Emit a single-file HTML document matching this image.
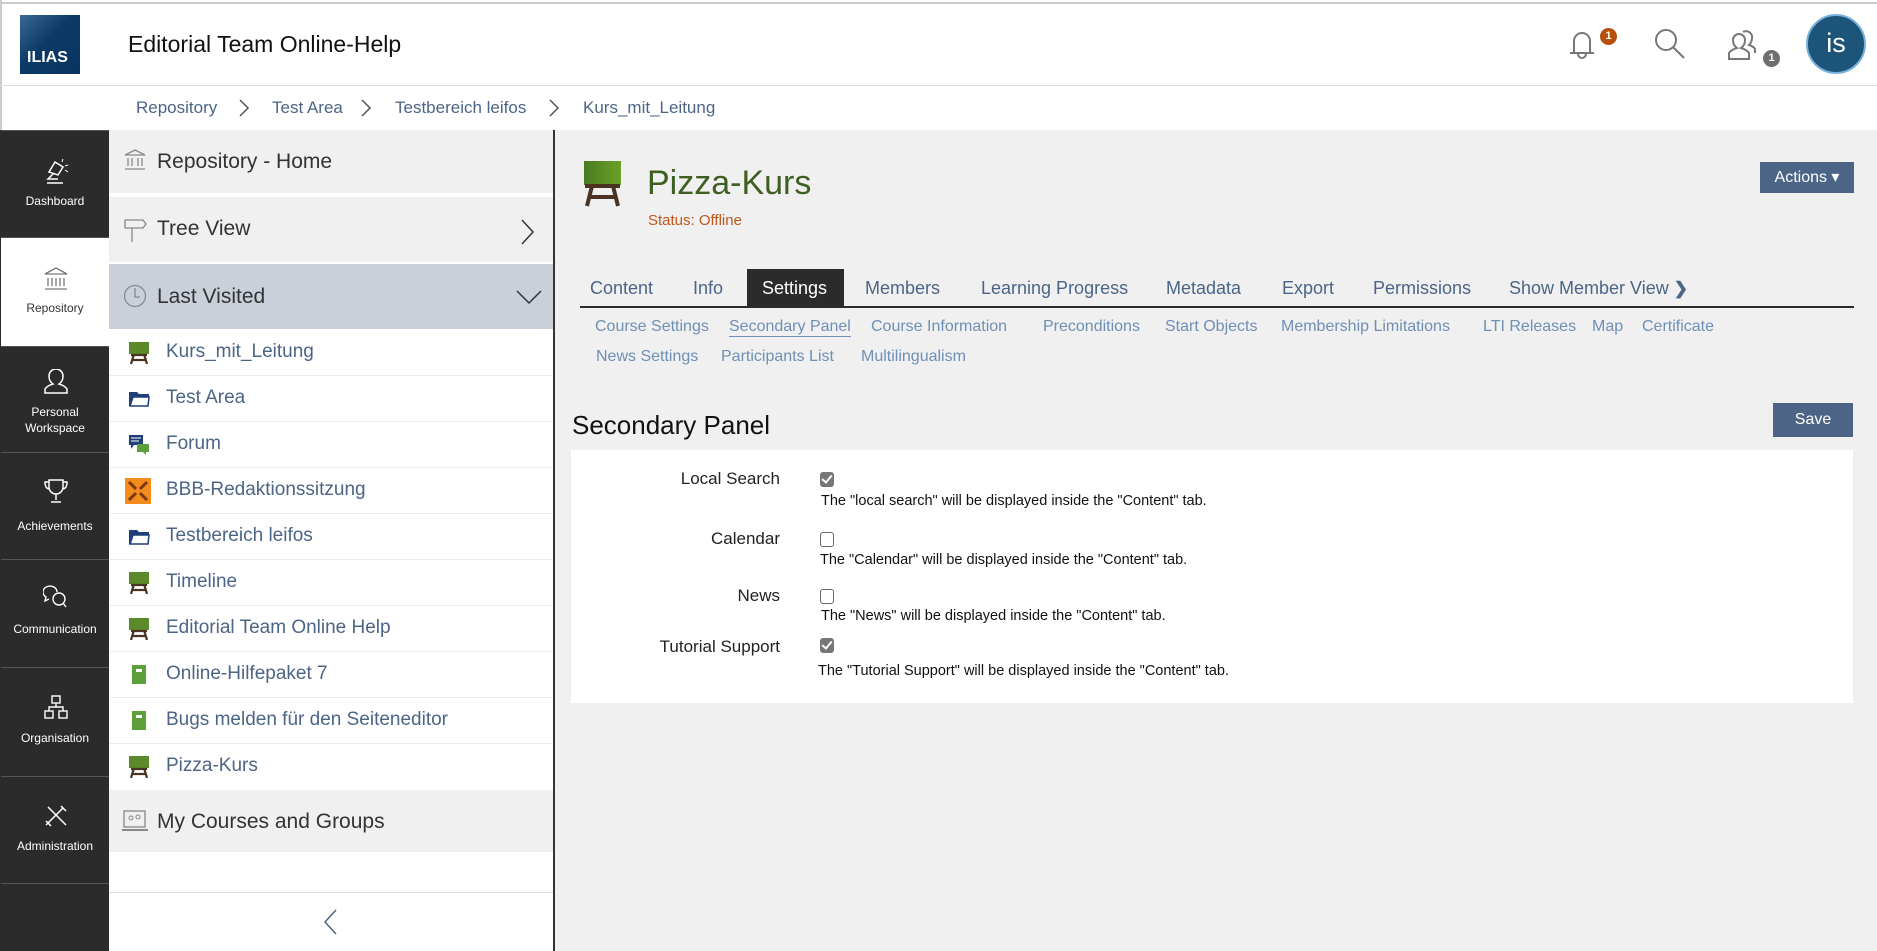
<!DOCTYPE html>
<html><head><meta charset="utf-8"><style>
*{margin:0;padding:0;box-sizing:border-box}
body{width:1877px;height:951px;overflow:hidden;background:#fff;font-family:"Liberation Sans",sans-serif;position:relative}
.a{position:absolute;white-space:nowrap}
.bc{color:#4c6586;font-size:17px;top:98px}
.mb{position:absolute;left:1px;width:108px;background:#2b2b2b;color:#fff;font-size:12px;text-align:center;border-top:1px solid #555}
.mb svg{position:absolute;left:42px}
.mb span{position:absolute;left:0;width:108px;line-height:16px}
.li{position:absolute;left:109px;width:444px;height:46px;border-bottom:1px solid #eee;background:#fff}
.li span{position:absolute;left:57px;top:11px;font-size:19px;color:#4c6586}
.li svg{position:absolute;left:19px;top:12px}
.tab{top:278px;font-size:18px;color:#4c6586}
.st{font-size:16px;color:#6f8fb5}
.lab{font-size:17px;color:#222;text-align:right;width:300px;left:480px}
.desc{font-size:14.5px;color:#111}
.cb{position:absolute;left:820px;width:14px;height:15px;border:1.5px solid #666;border-radius:3px;background:#fff}
.cb.on{background:#777;border-color:#777}
.cb.on:after{content:"";position:absolute;left:3px;top:0px;width:4px;height:8px;border:solid #fff;border-width:0 2px 2px 0;transform:rotate(40deg)}
</style></head><body>
<div class="a" style="left:0;top:2px;width:1877px;height:2px;background:#ccc"></div>
<div class="a" style="left:0;top:0;width:2px;height:130px;background:#ccc"></div>
<div class="a" style="left:20px;top:15px;width:60px;height:59px;background:linear-gradient(135deg,#3a6796,#0b3a66 45%,#083461)"></div>
<div class="a" style="left:27px;top:49px;color:#fff;font-weight:bold;font-size:16px">ILIAS</div>
<div class="a" style="left:128px;top:31px;font-size:23px;color:#111">Editorial Team Online-Help</div>
<div class="a" style="left:0;top:85px;width:1877px;height:1px;background:#ddd"></div>
<div class="a bc" style="left:136px">Repository</div>
<div class="a bc" style="left:272px">Test Area</div>
<div class="a bc" style="left:395px">Testbereich leifos</div>
<div class="a bc" style="left:583px">Kurs_mit_Leitung</div>
<svg class="a" style="left:238px;top:98px" width="12" height="20"><path d="M2 2l8 8-8 8" stroke="#555" fill="none" stroke-width="1.5"/></svg>
<svg class="a" style="left:360px;top:98px" width="12" height="20"><path d="M2 2l8 8-8 8" stroke="#555" fill="none" stroke-width="1.5"/></svg>
<svg class="a" style="left:548px;top:98px" width="12" height="20"><path d="M2 2l8 8-8 8" stroke="#555" fill="none" stroke-width="1.5"/></svg>
<svg class="a" style="left:1566px;top:27px" width="32" height="34"><path d="M4 26h24M8 26V14a8 8 0 0 1 16 0v12M12 27a4 4 0 0 0 8 0" stroke="#777" fill="none" stroke-width="2"/></svg>
<div class="a" style="left:1600px;top:28px;width:17px;height:17px;border-radius:50%;background:#b6500c;color:#fff;font-size:11px;font-weight:bold;text-align:center;line-height:17px">1</div>
<svg class="a" style="left:1653px;top:27px" width="34" height="34"><circle cx="13" cy="13" r="10" stroke="#777" stroke-width="2" fill="none"/><path d="M20 20l11 11" stroke="#777" stroke-width="2"/></svg>
<svg class="a" style="left:1726px;top:28px" width="34" height="34"><path d="M3 31v-6c2-3 5-4 8-5-3-2-4-5-4-8a6 6 0 0 1 12 0c0 3-1 6-4 8 3 1 6 2 8 5v6z" stroke="#777" stroke-width="2" fill="none"/><path d="M17 4a6 6 0 0 1 9 6c0 3-1 5-3 7 3 1 5 2 6 4v4" stroke="#777" stroke-width="2" fill="none"/></svg>
<div class="a" style="left:1763px;top:50px;width:17px;height:17px;border-radius:50%;background:#6f6f6f;color:#fff;font-size:11px;font-weight:bold;text-align:center;line-height:17px">1</div>
<div class="a" style="left:1806px;top:14px;width:60px;height:60px;border-radius:50%;background:#1d5479;border:2px solid #79b3dc;color:#fff;font-size:27px;text-align:center;line-height:54px">is</div>
<div class="a" style="left:0;top:130px;width:109px;height:821px;background:#2b2b2b"></div>
<div class="mb" style="top:130px;height:107px"><svg style="top:27px" width="26" height="28"><path d="M6 14l6-10 8 5-5 8zM10 16l-5 5h10M4 25h16" stroke="#fff" fill="none" stroke-width="1.5"/><path d="M22 8l3-1M22 12l3 2M19 4l1-3" stroke="#fff" stroke-width="1"/></svg><span style="top:62px">Dashboard</span></div>
<div class="mb" style="top:237px;height:109px;background:#fff;color:#333"><svg style="top:28px" width="26" height="26"><path d="M2 8L13 2l11 6zM5 12v8M9 12v8M17 12v8M21 12v8M13 12v8M2 23h22" stroke="#777" fill="none" stroke-width="1.3"/></svg><span style="top:62px">Repository</span></div>
<div class="mb" style="top:346px;height:106px"><svg style="top:22px" width="26" height="26"><path d="M2 24v-4c2-3 5-4 8-5-3-2-4-5-4-8a7 7 0 0 1 14 0c0 3-1 6-4 8 3 1 6 2 8 5v4z" stroke="#fff" fill="none" stroke-width="1.5"/></svg><span style="top:57px">Personal<br>Workspace</span></div>
<div class="mb" style="top:452px;height:107px"><svg style="top:24px" width="26" height="28"><path d="M6 3h14v7a7 7 0 0 1-14 0zM6 5H2c0 5 2 7 5 7M20 5h4c0 5-2 7-5 7M13 17v6M8 25h10" stroke="#fff" fill="none" stroke-width="1.5"/></svg><span style="top:65px">Achievements</span></div>
<div class="mb" style="top:559px;height:108px"><svg style="top:24px" width="26" height="26"><path d="M14 8a7 6 0 1 0-11 5l-1 4 4-2" stroke="#fff" fill="none" stroke-width="1.4"/><circle cx="16" cy="15" r="6" stroke="#fff" fill="none" stroke-width="1.4"/><path d="M20 19l3 4" stroke="#fff" stroke-width="1.4"/></svg><span style="top:61px">Communication</span></div>
<div class="mb" style="top:667px;height:109px"><svg style="top:26px" width="26" height="26"><rect x="9" y="2" width="8" height="7" stroke="#fff" fill="none" stroke-width="1.4"/><rect x="2" y="17" width="8" height="7" stroke="#fff" fill="none" stroke-width="1.4"/><rect x="16" y="17" width="8" height="7" stroke="#fff" fill="none" stroke-width="1.4"/><path d="M13 9v4H6v4M13 13h7v4" stroke="#fff" fill="none" stroke-width="1.4"/></svg><span style="top:62px">Organisation</span></div>
<div class="mb" style="top:776px;height:107px"><svg style="top:26px" width="26" height="26"><path d="M3 22L20 5M5 4l18 18M18 3l5 5M3 18l5 5" stroke="#fff" fill="none" stroke-width="1.5"/></svg><span style="top:61px">Administration</span></div>
<div class="mb" style="top:883px;height:68px"></div>
<div class="a" style="left:109px;top:130px;width:444px;height:821px;background:#fff"></div>
<div class="a" style="left:109px;top:130px;width:444px;height:63px;background:#f0f0f0"></div>
<svg class="a" style="left:123px;top:148px" width="24" height="24"><path d="M2 7L12 2l10 5zM5 10v8M9 10v8M15 10v8M19 10v8M2 21h20" stroke="#888" fill="none" stroke-width="1.3"/></svg>
<div class="a" style="left:157px;top:150px;font-size:21px;color:#333">Repository - Home</div>
<div class="a" style="left:109px;top:197px;width:444px;height:65px;background:#f0f0f0"></div>
<svg class="a" style="left:123px;top:216px" width="24" height="28"><path d="M2 4h18l3 4-3 4H2zM9 12v14" stroke="#888" fill="none" stroke-width="1.3"/></svg>
<div class="a" style="left:157px;top:217px;font-size:21px;color:#333">Tree View</div>
<svg class="a" style="left:520px;top:218px" width="16" height="28"><path d="M2 2l11 12L2 26" stroke="#333" fill="none" stroke-width="1.5"/></svg>
<div class="a" style="left:109px;top:264px;width:444px;height:65px;background:#c9d0da"></div>
<svg class="a" style="left:123px;top:284px" width="24" height="24"><circle cx="12" cy="12" r="10.5" stroke="#888" fill="none" stroke-width="1.3"/><path d="M12 4v9h5" stroke="#888" fill="none" stroke-width="1.3"/></svg>
<div class="a" style="left:157px;top:285px;font-size:21px;color:#333">Last Visited</div>
<svg class="a" style="left:515px;top:289px" width="28" height="16"><path d="M2 2l12 12L26 2" stroke="#333" fill="none" stroke-width="1.5"/></svg>

<div class="li" style="top:330px"><svg width="22" height="22"><rect x="1" y="0" width="20" height="12" fill="#5a8a2a"/><path d="M3 13h16M6 12l-3 10M16 12l3 10M5 18h12" stroke="#4a3322" stroke-width="2.2"/></svg><span>Kurs_mit_Leitung</span></div>
<div class="li" style="top:376px"><svg width="22" height="22"><path d="M1 4h8l2 2h10v3H5L2 18H1z" fill="#1f3f7a"/><path d="M2 18h18l1-9H5z" fill="#fff" stroke="#1f3f7a" stroke-width="1.5"/></svg><span>Test Area</span></div>
<div class="li" style="top:422px"><svg width="22" height="22"><path d="M1 1h14v10H6l-3 4v-4H1z" fill="#1f3f7a"/><path d="M3 4h10M3 7h8" stroke="#fff"/><path d="M9 10h12v8h-3v3l-3-3H9z" fill="#5ba03a"/></svg><span>Forum</span></div>
<div class="li" style="top:468px"><svg width="26" height="26" style="left:16px;top:10px"><rect width="26" height="26" fill="#f38b1d"/><path d="M4 4l7 7M22 4l-7 7M4 22l7-7M22 22l-7-7" stroke="#7a3a10" stroke-width="3"/></svg><span>BBB-Redaktionssitzung</span></div>
<div class="li" style="top:514px"><svg width="22" height="22"><path d="M1 4h8l2 2h10v3H5L2 18H1z" fill="#1f3f7a"/><path d="M2 18h18l1-9H5z" fill="#fff" stroke="#1f3f7a" stroke-width="1.5"/></svg><span>Testbereich leifos</span></div>
<div class="li" style="top:560px"><svg width="22" height="22"><rect x="1" y="0" width="20" height="12" fill="#5a8a2a"/><path d="M3 13h16M6 12l-3 10M16 12l3 10M5 18h12" stroke="#4a3322" stroke-width="2.2"/></svg><span>Timeline</span></div>
<div class="li" style="top:606px"><svg width="22" height="22"><rect x="1" y="0" width="20" height="12" fill="#5a8a2a"/><path d="M3 13h16M6 12l-3 10M16 12l3 10M5 18h12" stroke="#4a3322" stroke-width="2.2"/></svg><span>Editorial Team Online Help</span></div>
<div class="li" style="top:652px"><svg width="22" height="22"><rect x="4" y="1" width="14" height="19" fill="#5ba03a"/><rect x="8" y="5" width="6" height="3" fill="#fff"/></svg><span>Online-Hilfepaket 7</span></div>
<div class="li" style="top:698px"><svg width="22" height="22"><rect x="4" y="1" width="14" height="19" fill="#5ba03a"/><rect x="8" y="5" width="6" height="3" fill="#fff"/></svg><span>Bugs melden für den Seiteneditor</span></div>
<div class="li" style="top:744px;border:0"><svg width="22" height="22"><rect x="1" y="0" width="20" height="12" fill="#5a8a2a"/><path d="M3 13h16M6 12l-3 10M16 12l3 10M5 18h12" stroke="#4a3322" stroke-width="2.2"/></svg><span>Pizza-Kurs</span></div>
<div class="a" style="left:109px;top:790px;width:444px;height:62px;background:#f0f0f0"></div>
<svg class="a" style="left:122px;top:809px" width="26" height="24"><rect x="2" y="2" width="21" height="16" stroke="#888" fill="none" stroke-width="1.3"/><path d="M0 21h26" stroke="#888" stroke-width="2"/><circle cx="9" cy="9" r="2" stroke="#888" fill="none"/><circle cx="16" cy="8" r="2" stroke="#888" fill="none"/></svg>
<div class="a" style="left:157px;top:810px;font-size:21px;color:#333">My Courses and Groups</div>
<div class="a" style="left:109px;top:892px;width:444px;height:1px;background:#ddd"></div>
<svg class="a" style="left:322px;top:908px" width="16" height="28"><path d="M14 2L3 14l11 12" stroke="#4c6586" fill="none" stroke-width="1.5"/></svg>
<div class="a" style="left:553px;top:130px;width:2px;height:821px;background:#333"></div>
<div class="a" style="left:555px;top:130px;width:1322px;height:821px;background:#f0f0f0"></div>
<svg class="a" style="left:583px;top:161px" width="40" height="46"><defs><linearGradient id="g"><stop offset="0" stop-color="#4a7a20"/><stop offset="1" stop-color="#6aa22a"/></linearGradient></defs><rect x="1" y="0" width="37" height="24" fill="url(#g)"/><path d="M2 25h35M9 25l-5 20M30 25l5 20M6 36h27" stroke="#4a3322" stroke-width="4"/></svg>
<div class="a" style="left:647px;top:164px;font-size:34px;color:#3f5f22">Pizza-Kurs</div>
<div class="a" style="left:648px;top:212px;font-size:15px;color:#c0561a">Status: Offline</div>
<div class="a" style="left:1760px;top:162px;width:94px;height:31px;background:#4c6586;color:#fff;font-size:16px;line-height:31px;text-align:center">Actions ▾</div>
<div class="a" style="left:747px;top:269px;width:97px;height:38px;background:#2b2b2b"></div>
<div class="a" style="left:580px;top:306px;width:1274px;height:2px;background:#2b2b2b"></div>
<div class="a tab" style="left:590px">Content</div>
<div class="a tab" style="left:693px">Info</div>
<div class="a tab" style="left:762px;color:#fff">Settings</div>
<div class="a tab" style="left:865px">Members</div>
<div class="a tab" style="left:981px">Learning Progress</div>
<div class="a tab" style="left:1166px">Metadata</div>
<div class="a tab" style="left:1282px">Export</div>
<div class="a tab" style="left:1373px">Permissions</div>
<div class="a tab" style="left:1509px">Show Member View <b style="font-size:17px">❯</b></div>
<div class="a st" style="left:595px;top:318px">Course Settings</div>
<div class="a st" style="left:729px;top:318px;border-bottom:1.5px solid #6f8fb5">Secondary Panel</div>
<div class="a st" style="left:871px;top:318px">Course Information</div>
<div class="a st" style="left:1043px;top:318px">Preconditions</div>
<div class="a st" style="left:1165px;top:318px">Start Objects</div>
<div class="a st" style="left:1281px;top:318px">Membership Limitations</div>
<div class="a st" style="left:1483px;top:318px">LTI Releases</div>
<div class="a st" style="left:1592px;top:318px">Map</div>
<div class="a st" style="left:1642px;top:318px">Certificate</div>
<div class="a st" style="left:596px;top:348px">News Settings</div>
<div class="a st" style="left:721px;top:348px">Participants List</div>
<div class="a st" style="left:861px;top:348px">Multilingualism</div>
<div class="a" style="left:572px;top:410px;font-size:26px;color:#111">Secondary Panel</div>
<div class="a" style="left:1773px;top:403px;width:80px;height:34px;background:#4c6586;color:#fff;font-size:16px;line-height:34px;text-align:center">Save</div>
<div class="a" style="left:571px;top:450px;width:1282px;height:253px;background:#fff"></div>
<div class="a lab" style="top:469px">Local Search</div><div class="cb on" style="top:472px"></div>
<div class="a desc" style="left:821px;top:493px">The "local search" will be displayed inside the "Content" tab.</div>
<div class="a lab" style="top:529px">Calendar</div><div class="cb" style="top:532px"></div>
<div class="a desc" style="left:820px;top:552px">The "Calendar" will be displayed inside the "Content" tab.</div>
<div class="a lab" style="top:586px">News</div><div class="cb" style="top:589px"></div>
<div class="a desc" style="left:821px;top:608px">The "News" will be displayed inside the "Content" tab.</div>
<div class="a lab" style="top:637px">Tutorial Support</div><div class="cb on" style="top:638px"></div>
<div class="a desc" style="left:818px;top:663px">The "Tutorial Support" will be displayed inside the "Content" tab.</div>
</body></html>
